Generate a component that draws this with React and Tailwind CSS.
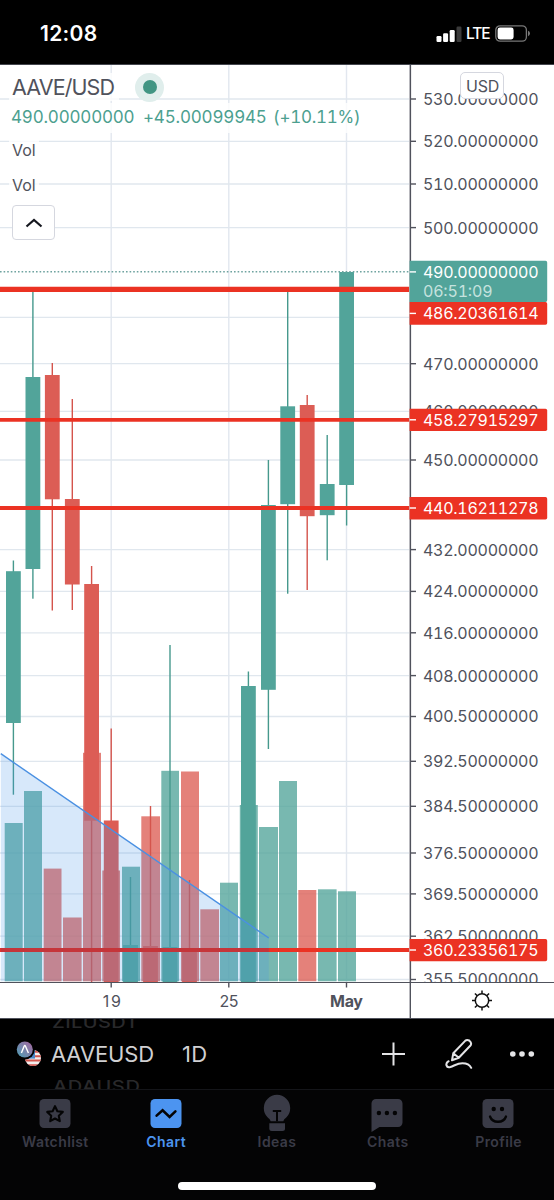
import React from "react";

const GREEN = "#52a49a";
const RED = "#dc5d55";
const LEVEL = "#eb3223";
const AXIS = "#50525c";

const PRICES = [
  ["530.00000000", 99], ["520.00000000", 141.3], ["510.00000000", 184], ["500.00000000", 227.6],
  ["470.00000000", 363.7], ["460.00000000", 411.3], ["450.00000000", 460], ["432.00000000", 549.6],
  ["424.00000000", 591.4], ["416.00000000", 632.8], ["408.00000000", 675.6], ["400.50000000", 716.5],
  ["392.50000000", 761.3], ["384.50000000", 806.3], ["376.50000000", 853], ["369.50000000", 893.9],
  ["362.50000000", 936.2], ["355.50000000", 979.5],
];
const GRID_Y = [...PRICES.map((p) => p[1]), 317.4];
const GRID_X = [111.2, 228.8, 346.5];

// centre, wick top, wick bottom, body top, body bottom, rising
const CANDLES = [
  [13.4, 560.5, 794.7, 571.2, 723, 1],
  [32.9, 291, 598.7, 377, 569, 1],
  [52.3, 363, 610.5, 375, 499.3, 0],
  [72.3, 399, 610, 499, 584.5, 0],
  [91.6, 566, 982, 584, 820.7, 0],
  [111.2, 728.5, 982, 820.5, 982, 0],
  [130.5, 877, 982, 945, 982, 1],
  [150.5, 806, 982, 946, 982, 0],
  [170, 645, 982, 947, 982, 1],
  [189.5, 880, 982, 949, 982, 0],
  [248.4, 671.5, 982, 686, 982, 1],
  [268.4, 460, 749, 505, 689.8, 1],
  [287.7, 291, 593.7, 406.3, 504.2, 1],
  [307.2, 395, 590, 405, 516.2, 0],
  [327.2, 435, 560.3, 484, 515.2, 1],
  [346.6, 272, 525.5, 272, 485, 1],
];

// left, right, top, rising
const VOLUMES = [
  [4.7, 22.7, 823, 1], [24, 42, 791, 1], [43.7, 61.5, 868.6, 0], [63, 81.6, 917.5, 0],
  [83, 101, 752.8, 0], [102.3, 120, 870.5, 0], [122, 140, 866.7, 1], [141.3, 160, 816.3, 0],
  [161.3, 179, 770.8, 1], [181, 199, 771.5, 0], [200.3, 219, 909.3, 0], [220, 238, 882.7, 1],
  [239.8, 257.8, 805, 1], [259, 278, 827, 1], [279, 297, 781, 1], [298.3, 316.3, 890, 0],
  [318, 336.6, 889.3, 1], [338, 356, 891.3, 1],
];

const LEVELS = [[289.3, 5.3], [419.8, 3.8], [508, 4], [950, 3.8]];

const TAGS = [
  ["486.20361614", 302, 324.7, 313.4],
  ["458.27915297", 408.7, 431, 419.8],
  ["440.16211278", 497, 519.5, 508],
  ["360.23356175", 939, 961.2, 950],
];

function Plot() {
  return (
    <svg className="block shrink-0" width="409" height="917" viewBox="0 65 409 917">
      {GRID_X.map((x) => (
        <line key={x} x1={x} x2={x} y1="65" y2="982" stroke="#e2e7ef" strokeWidth="1.4" />
      ))}
      {GRID_Y.map((y) => (
        <line key={y} x1="0" x2="409" y1={y} y2={y} stroke="#e0e7ee" strokeWidth="1.3" />
      ))}
      {VOLUMES.map(([l, r, t, up]) => (
        <rect key={l} x={l} y={t} width={r - l} height={981.3 - t} fill={up ? GREEN : RED} fillOpacity="0.78" />
      ))}
      {CANDLES.map(([c, wt, wb, bt, bb, up]) => (
        <g key={c} fill={up ? GREEN : RED}>
          <rect x={c - 0.7} y={wt} width="1.4" height={wb - wt} fill={up ? "#46998d" : "#d4544c"} />
          <rect x={c - 7.4} y={bt} width="14.8" height={bb - bt} />
        </g>
      ))}
      <line x1="0" x2="409" y1="271.8" y2="271.8" stroke="#6fa3a0" strokeWidth="1.4" strokeDasharray="1.6 2" />
      {LEVELS.map(([y, w]) => (
        <line key={y} x1="0" x2="409" y1={y} y2={y} stroke={LEVEL} strokeWidth={w} />
      ))}
      <path d="M.8 753.7L268.8 938V981.3H.8Z" fill="#4a96e6" fillOpacity="0.22" />
      <path d="M.8 753.7L268.8 938" stroke="#4a90e2" strokeWidth="1.4" fill="none" />
      <line x1="0.8" x2="268.8" y1="950" y2="950" stroke="#c5353a" strokeWidth="3.8" />
    </svg>
  );
}

function PriceText({ y, children, fill }) {
  return (
    <text x="423" y={y + 5.9} textLength="115.5" fontSize="16" fill={fill}>{children}</text>
  );
}

function PriceAxis() {
  return (
    <svg className="block shrink-0 font-['Inter',sans-serif] tabular-nums" width="145" height="917" viewBox="409 65 145 917">
      <rect x="409.6" y="65" width="1.5" height="917" fill={AXIS} />
      {PRICES.map(([t, y]) => (
        <g key={t}>
          <rect x="411" y={y - 0.7} width="5" height="1.4" fill={AXIS} />
          <PriceText y={y} fill={AXIS}>{t}</PriceText>
        </g>
      ))}
      {TAGS.map(([t, top, bottom, y]) => (
        <g key={t}>
          <path d={`M409.6 ${top}H545.5a1.7 1.7 0 0 1 1.7 1.7V${bottom - 1.7}a1.7 1.7 0 0 1-1.7 1.7H409.6Z`} fill={LEVEL} />
          <rect x="409.6" y={y - 0.7} width="6.4" height="1.4" fill="#fff" />
          <PriceText y={y} fill="#fff">{t}</PriceText>
        </g>
      ))}
      <path d="M409.6 260.8H545.5a1.7 1.7 0 0 1 1.7 1.7V300.3a1.7 1.7 0 0 1-1.7 1.7H409.6Z" fill={GREEN} />
      <rect x="409.6" y="271.2" width="6.4" height="1.4" fill="#fff" />
      <PriceText y={272} fill="#fff">490.00000000</PriceText>
      <text x="423" y="296.6" textLength="69.5" fontSize="16" fill="#c5e2de">06:51:09</text>
    </svg>
  );
}

function TimeAxis() {
  return (
    <div className="flex h-[37px] border-b border-[#50525c] bg-white">
      <svg className="block shrink-0 font-['Inter',sans-serif]" width="411" height="36" viewBox="0 982 411 36">
        <rect x="0" y="981.6" width="411" height="1.4" fill={AXIS} />
        <rect x="409.6" y="982" width="1.5" height="37" fill={AXIS} />
        {GRID_X.map((x) => (
          <rect key={x} x={x - 0.7} y="982" width="1.4" height="5.5" fill={AXIS} />
        ))}
        <g fill={AXIS} fontSize="16" textAnchor="middle">
          <text x="111.8" y="1007.2" textLength="18">19</text>
          <text x="229" y="1007.2" textLength="19">25</text>
          <text x="346.5" y="1007.2" textLength="33" fontWeight="700">May</text>
        </g>
      </svg>
      <div className="flex grow items-center justify-center border-t border-[#50525c]">
        <svg className="mr-px" width="22" height="22" viewBox="-11 -10.5 22 22" fill="none" stroke="#111" strokeWidth="1.5">
          <circle r="6.7" />
          {[0, 45, 90, 135, 180, 225, 270, 315].map((a) => (
            <path key={a} d="M0-6.7V-10" transform={`rotate(${a})`} />
          ))}
        </svg>
      </div>
    </div>
  );
}

function Legend() {
  return (
    <div className="absolute left-0 top-0 flex flex-col items-start pl-[9px] text-[#50525c]">
      <div className="mt-[6px] flex h-[32px] items-center">
        <span className="w-[110px] whitespace-nowrap bg-white/80 pl-[3px] text-[21.5px] leading-[28px] tracking-[-0.9px]">AAVE/USD</span>
        <span className="ml-[16px] flex size-[29px] items-center justify-center rounded-full bg-[#e0eeec]">
          <span className="size-[14px] rounded-full bg-[#419583]" />
        </span>
      </div>
      <div className="flex h-[30px] w-[354px] items-center bg-white/80 pl-[2px] text-[17px] tabular-nums text-[#4ca08f]">
        <span className="w-[132px] whitespace-nowrap tracking-[-0.2px]">490.00000000</span>
        <span className="w-[130px] whitespace-nowrap tracking-[-0.18px]">+45.00099945</span>
        <span className="whitespace-nowrap tracking-[-0.25px]">(+10.11%)</span>
      </div>
      <span className="mt-[5px] bg-white/80 px-[3px] text-[16px] leading-[24px]">Vol</span>
      <span className="mt-[11px] bg-white/80 px-[3px] text-[16px] leading-[24px]">Vol</span>
      <button className="ml-[3px] mt-[8px] flex h-[35px] w-[43px] items-center justify-center rounded-[4px] border-[1.5px] border-[#d5d7df] bg-white">
        <svg width="18" height="10" viewBox="0 0 18 10" fill="none" stroke="#15171f" strokeWidth="2.2">
          <path d="M1.5 8.5L9 2L16.5 8.5" />
        </svg>
      </button>
    </div>
  );
}

function StatusBar() {
  return (
    <header className="flex h-[65px] items-start justify-between border-b border-[#43454d] bg-black pl-[40px] pr-[23px] pt-[21px] text-white">
      <span className="text-[21px] font-semibold leading-[25px] tracking-[0.3px]">12:08</span>
      <div className="flex h-[25px] items-center">
        <svg width="26" height="16" viewBox="0 0 26 16" fill="#fff">
          <rect x="0.5" y="10" width="5" height="6" rx="1.2" />
          <rect x="7.1" y="7.3" width="5" height="8.7" rx="1.2" />
          <rect x="13.7" y="4" width="5" height="12" rx="1.2" />
          <rect x="20.5" y=".5" width="5" height="15.5" rx="1.2" fill="#3a3a3a" />
        </svg>
        <span className="ml-[4px] w-[29px] text-[15.5px] font-medium leading-[20px] tracking-[-1.1px]">LTE</span>
        <svg width="36" height="17" viewBox="0 0 36 17">
          <rect x=".8" y=".8" width="30.6" height="15.4" rx="4.2" fill="none" stroke="#777" strokeWidth="1.3" />
          <rect x="2.6" y="2.6" width="16" height="11.8" rx="2.4" fill="#fff" />
          <path d="M33 5.8q2 .8 2 2.7t-2 2.7z" fill="#777" />
        </svg>
      </div>
    </header>
  );
}

function CoinIcon() {
  return (
    <svg className="shrink-0" width="26" height="26" viewBox="0 0 26 26">
      <defs>
        <linearGradient id="coin" x1="0" y1="1" x2="1" y2="0">
          <stop offset="0" stopColor="#4b9fb5" />
          <stop offset="1" stopColor="#a8669f" />
        </linearGradient>
        <clipPath id="flag"><circle cx="17" cy="17" r="8" /></clipPath>
      </defs>
      <g clipPath="url(#flag)">
        <rect x="9" y="9" width="17" height="17" fill="#f3eeee" />
        <path d="M9 10.7h17M9 15.3h17M9 19.5h17M9 24.2h17" stroke="#d4564f" strokeWidth="2.1" />
        <rect x="9" y="9" width="10" height="8.6" fill="#4a86c8" />
      </g>
      <circle cx="8.8" cy="8.5" r="10" fill="#000" />
      <circle cx="8.8" cy="8.5" r="8" fill="url(#coin)" />
      <path d="M5.4 12L8.1 5.2Q8.8 3.8 9.5 5.2L12.4 12" fill="none" stroke="#fff" strokeWidth="1.4" />
    </svg>
  );
}

function Toolbar() {
  return (
    <div className="relative flex h-[70px] items-center overflow-hidden bg-black pl-[16px] text-[#d0d0d2]">
      <span className="absolute left-[52px] top-[-7px] origin-left scale-y-[.8] text-[20px] font-medium leading-[20px] tracking-[0.4px] text-[#29292b]">ZILUSDT</span>
      <span className="absolute left-[53px] top-[57px] origin-left scale-y-[.8] text-[20px] font-medium leading-[20px] tracking-[0.6px] text-[#29292b]">ADAUSD</span>
      <CoinIcon />
      <span className="ml-[9px] w-[131px] text-[22px] leading-[28px] tracking-[-0.15px]">AAVEUSD</span>
      <span className="text-[22px] leading-[28px] tracking-[0.3px]">1D</span>
      <div className="ml-auto flex items-center pr-[18px] text-[#e4e4e6]">
        <svg width="24" height="24" viewBox="0 0 24 24" stroke="currentColor" strokeWidth="2">
          <path d="M11.5 .5V23.5M0 12H23" />
        </svg>
        <svg className="ml-[39px]" width="28" height="32" viewBox="0 0 28 32" fill="none" stroke="currentColor" strokeWidth="2" strokeLinejoin="round" strokeLinecap="round">
          <path d="M7 22.3L8.3 15.2L20.4 2.6Q22 1.3 24.2 2.5Q27 4.7 25.7 7.2L13.8 19.8ZM8.3 15.2L13.8 19.8" />
          <path d="M3.6 23.2C-.2 25.5 1.2 30.2 5.4 29C9.2 27.8 12.4 25.2 17.4 25.2C21.4 25.2 24.8 26.8 26.2 29.8" />
        </svg>
        <svg className="ml-[37px]" width="26" height="8" viewBox="0 0 26 8" fill="currentColor">
          <circle cx="2.8" cy="4" r="2.8" />
          <circle cx="12" cy="4" r="2.8" />
          <circle cx="21.3" cy="4" r="2.8" />
        </svg>
      </div>
    </div>
  );
}

const Box = () => <rect x="0.5" y="1" width="31" height="29" rx="4.5" fill="currentColor" />;

const TABS = [
  ["Watchlist", <><Box /><path d="M16 8.2l2.4 5 5.4.7-4 3.8 1 5.5-4.8-2.7-4.8 2.7 1-5.5-4-3.8 5.4-.7z" fill="none" stroke="#040405" strokeWidth="2.1" strokeLinejoin="round" /></>],
  ["Chart", <><Box /><path d="M6.6 17.6L12.6 12.2L19.6 18.9L25.4 13.4" fill="none" stroke="#040405" strokeWidth="2.6" strokeLinecap="round" strokeLinejoin="miter" /></>],
  ["Ideas", <><path d="M10.6 23.2C10.2 21.3 9 20.6 7.5 19.2A13.2 13.2 0 1 1 26.5 19.2C25 20.6 23.8 21.3 23.4 23.2Z" fill="currentColor" /><path d="M9.3 25.3H25V30.5Q25 33 22.5 33H11.8Q9.3 33 9.3 30.5Z" fill="currentColor" /><path d="M12.8 13H21.2M17 13V23.3" stroke="#040405" strokeWidth="2" /></>],
  ["Chats", <><path d="M5 1H27a4.5 4.5 0 0 1 4.5 4.5V24.6a4.5 4.5 0 0 1-4.5 4.5H8.5L.5 34V5.5A4.5 4.5 0 0 1 5 1Z" fill="currentColor" /><g fill="#040405"><circle cx="7.9" cy="15" r="2.2" /><circle cx="15.9" cy="15" r="2.2" /><circle cx="23.9" cy="15" r="2.2" /></g></>],
  ["Profile", <><Box /><circle cx="11.7" cy="11" r="2.2" fill="#040405" /><circle cx="20" cy="11" r="2.2" fill="#040405" /><path d="M8 18.5C10.5 25.5 21.5 25.5 24 18.5" fill="none" stroke="#040405" strokeWidth="2.3" strokeLinecap="round" /></>],
];

function TabBar() {
  return (
    <nav className="grid h-[111px] grid-cols-5 border-t border-[#141519] bg-[#040405] pt-[8px]">
      {TABS.map(([name, icon], i) => (
        <div key={name} className={i === 1 ? "flex flex-col items-center text-[#4c94f0]" : "flex flex-col items-center text-[#3a3b47]"}>
          <svg className="mr-px shrink-0" width="32" height="34" viewBox="0 0 32 34" overflow="visible">{icon}</svg>
          <span className="text-[14px] font-semibold leading-[19px] tracking-[0.4px]">{name}</span>
        </div>
      ))}
    </nav>
  );
}

export default function App() {
  return (
    <div className="relative flex h-[1200px] w-[554px] flex-col overflow-hidden bg-black font-['Inter',sans-serif]">
      <StatusBar />
      <main className="relative flex h-[917px] shrink-0 bg-white">
        <Plot />
        <PriceAxis />
        <Legend />
        <span className="absolute left-[460px] top-[7px] flex h-[27px] w-[44px] items-center justify-center rounded-[5px] border-[1.5px] border-[#d5d7df] bg-white pl-px text-[16px] tracking-[-0.3px] text-[#50525c]">USD</span>
      </main>
      <TimeAxis />
      <Toolbar />
      <TabBar />
      <div className="absolute bottom-[10px] left-[178px] h-[8px] w-[198px] rounded-full bg-white" />
    </div>
  );
}
